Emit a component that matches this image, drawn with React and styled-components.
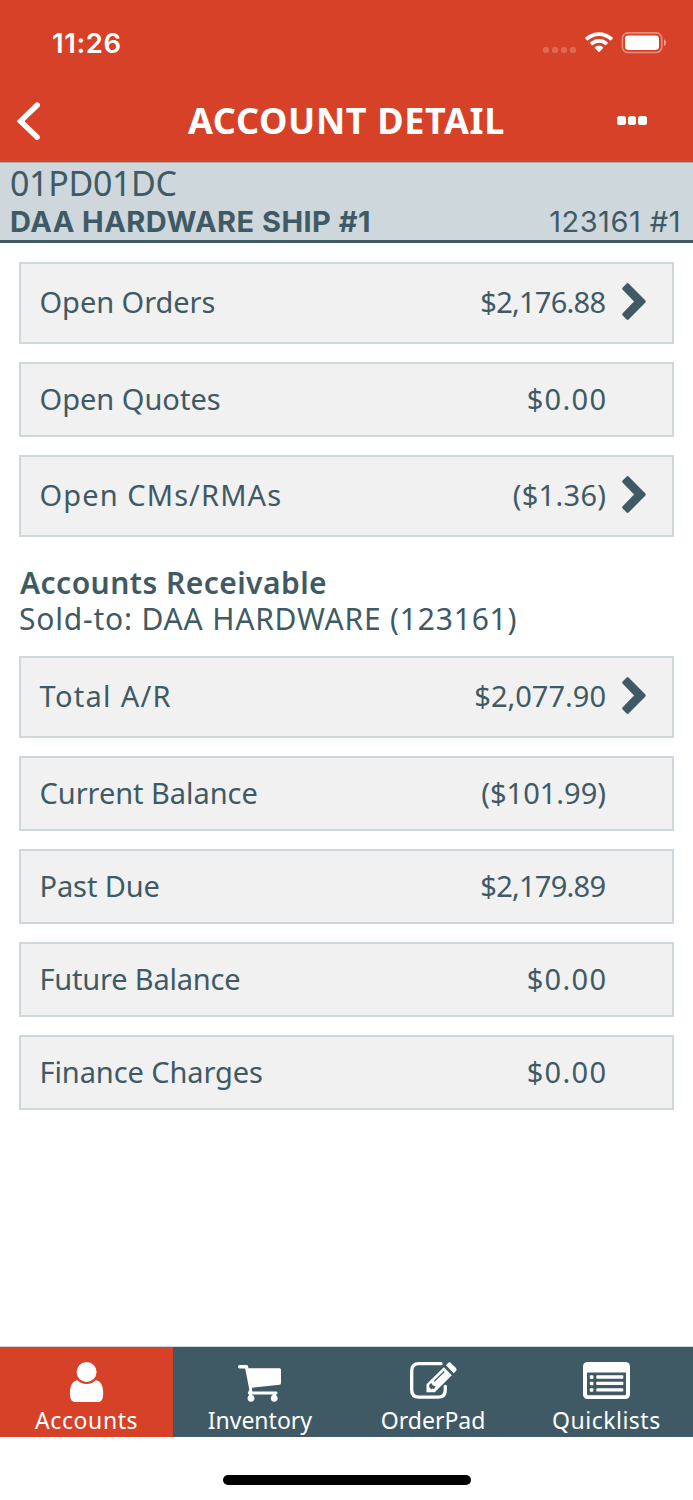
// Account detail screen
import React from 'react';
import styled, { createGlobalStyle } from 'styled-components';

const summaryRows = [
  { label: 'Open Orders', amount: '$2,176.88', link: true, spacing: -0.05, amountSpacing: -0.75 },
  { label: 'Open Quotes', amount: '$0.00', spacing: 0, amountSpacing: 1.3 },
  { label: 'Open CMs/RMAs', amount: '($1.36)', link: true, spacing: 1.1, amountSpacing: 0.3 },
];

const receivableRows = [
  { label: 'Total A/R', amount: '$2,077.90', link: true, spacing: 1.3, amountSpacing: 0 },
  { label: 'Current Balance', amount: '($101.99)', spacing: -0.05, amountSpacing: 0 },
  { label: 'Past Due', amount: '$2,179.89', spacing: -0.1, amountSpacing: -0.75 },
  { label: 'Future Balance', amount: '$0.00', spacing: -0.2, amountSpacing: 1.3 },
  { label: 'Finance Charges', amount: '$0.00', spacing: -0.1, amountSpacing: 1.3 },
];

const WifiIcon = () => (
  <svg width="28" height="21" viewBox="0 0 28 21" fill="#fff">
    <path d="M14 0.2C19.2 0.2 24 2.2 27.6 5.6Q28.1 6.2 27.6 6.7L26 8.3Q25.4 8.8 24.9 8.3C22 5.6 18.2 4 14 4S6 5.6 3.1 8.3Q2.6 8.8 2 8.3L0.4 6.7Q-0.1 6.2 0.4 5.6C4 2.2 8.8 0.2 14 0.2Z" />
    <path d="M14 7C17.3 7 20.3 8.2 22.6 10.3Q23.2 10.9 22.6 11.5L21 13Q20.4 13.5 19.9 13C18.3 11.6 16.2 10.8 14 10.8S9.7 11.6 8.1 13Q7.6 13.5 7 13L5.4 11.5Q4.8 10.9 5.4 10.3C7.7 8.2 10.7 7 14 7Z" />
    <path d="M14 13.8C15.6 13.8 16.9 14.3 18 15.2Q18.5 15.7 18 16.2L14.6 19.7Q14 20.3 13.4 19.7L10 16.2Q9.5 15.7 10 15.2C11.1 14.3 12.4 13.8 14 13.8Z" />
  </svg>
);

const BatteryIcon = () => (
  <svg width="46" height="22" viewBox="0 0 46 22">
    <rect x="0.4" y="0.9" width="39.4" height="19.6" rx="5.5" fill="none" stroke="#fff" strokeOpacity="0.4" strokeWidth="1.6" />
    <rect x="3" y="3.5" width="34" height="14.4" rx="3.3" fill="#fff" />
    <path d="M42 7.3V14.1Q44 13.2 44 10.7T42 7.3Z" fill="#fff" fillOpacity="0.5" />
  </svg>
);

const BackIcon = () => (
  <svg width="24" height="38" viewBox="0 0 24 38" fill="none" stroke="#fff" strokeWidth="5.4" strokeLinecap="round">
    <path d="M20.300 3L3.500 19.200L20.300 35.200" />
  </svg>
);

const ChevronIcon = () => (
  <svg width="24" height="37" viewBox="0 0 24 37" fill="#405a65" stroke="#405a65" strokeWidth="3.4" strokeLinejoin="round">
    <path d="M4.600 1.900L21 18.500L4.600 35.100L0.900 31.400L13.500 18.500L0.900 5.600Z" />
  </svg>
);

const PersonIcon = () => (
  <svg width="34" height="40" viewBox="0 0 34 40" fill="#fff">
    <circle cx="16.6" cy="10" r="10" />
    <path d="M7.5 18.2C9.5 20.6 12.8 22 16.6 22S23.7 20.6 25.7 18.2C31 18.6 33.2 24 33.2 31.5C33.2 37.5 31.5 40 27.5 40H5.7C1.7 40 0 37.5 0 31.5C0 24 2.2 18.6 7.5 18.2Z" />
  </svg>
);

const CartIcon = () => (
  <svg width="43" height="37" viewBox="0 0 43 37" fill="#fff">
    <path d="M1.5 0H8.5Q9.7 0 10 1.3L10.5 3.2H41.5Q43 3.2 43 4.7V18Q43 19.5 41.5 19.7L14 22.8L14.3 26.5H38.2Q39.5 26.5 39.5 28T38.2 29.5H11Q9.5 29.5 10 27.5L11.3 24.500L7.200 3.500H1.500Q0 3.300 0 1.700T1.500 0Z" />
    <path d="M11 26H14V31H11Z" />
    <circle cx="13" cy="33.3" r="3.4" />
    <circle cx="36.2" cy="33.3" r="3.4" />
    <path d="M34.5 29H38V31H34.5Z" />
  </svg>
);

const OrderPadIcon = () => (
  <svg width="47" height="37" viewBox="0 0 47 37">
    <path d="M31 1.7H9Q1.7 1.7 1.7 9V28Q1.7 35.2 9 35.2H28Q35.3 35.2 35.3 28V24.500" fill="none" stroke="#fff" strokeWidth="3.3" strokeLinecap="round" />
    <path d="M33.8 5.2L41.8 13.2L24.8 30.3H16.5V22.2Z" fill="#fff" />
    <path d="M36 3.2L38 1Q39.4-0.3 40.8 1L46 6.1Q47.400 7.600 46 9L43.700 11.200Z" fill="#fff" />
    <path d="M34.2 9.5L24.3 19.2" fill="none" stroke="#405a65" strokeWidth="1.2" />
    <path d="M19.3 22.7L21.3 20.9L22.6 23.2L25.6 24.4L24.1 26.9L22.2 26.6L21.600 27.400L19.200 25.200Z" fill="#405a65" />
  </svg>
);

const QuicklistIcon = () => (
  <svg width="47" height="37" viewBox="0 0 47 37">
    <rect width="47" height="37" rx="4.5" fill="#fff" />
    <path d="M4 10.5H43V32Q43 33.2 42 33.2H5Q4 33.2 4 32Z" fill="#405a65" />
    <g fill="#fff">
      <rect x="6.8" y="13.3" width="3.6" height="3.6" rx="1" />
      <rect x="6.8" y="19.7" width="3.6" height="3.6" rx="1" />
      <rect x="6.8" y="26.2" width="3.6" height="3.6" rx="1" />
      <rect x="13.3" y="13.3" width="27" height="3.4" rx="0.8" />
      <rect x="13.3" y="19.7" width="27" height="3.4" rx="0.8" />
      <rect x="13.3" y="26.2" width="27" height="3.4" rx="0.8" />
    </g>
  </svg>
);

const Row = ({ label, amount, link, spacing, amountSpacing }) => (
  <RowBox $tall={link}>
    <RowLabel $spacing={spacing}>{label}</RowLabel>
    <RowAmount $spacing={amountSpacing}>{amount}</RowAmount>
    <RowAction>{link && <ChevronIcon />}</RowAction>
  </RowBox>
);

const App = () => (
  <>
    <GlobalStyle />
    <Screen>
      <Header>
        <StatusBar>
          <Time>11:26</Time>
          <Signal><i /><i /><i /><i /></Signal>
          <WifiIcon />
          <BatteryIcon />
        </StatusBar>
        <NavBar>
          <BackIcon />
          <Title>ACCOUNT DETAIL</Title>
          <MoreButton><i /><i /><i /></MoreButton>
        </NavBar>
      </Header>

      <AccountStrip>
        <AccountCode>01PD01DC</AccountCode>
        <AccountLine>
          <AccountName>DAA HARDWARE SHIP #1</AccountName>
          <AccountNumber>123161 #1</AccountNumber>
        </AccountLine>
      </AccountStrip>

      <Content>
        <RowList>
          {summaryRows.map((row) => <Row key={row.label} {...row} />)}
        </RowList>
        <SectionHead>
          <SectionTitle>Accounts Receivable</SectionTitle>
          <SectionText>Sold-to: DAA HARDWARE (123161)</SectionText>
        </SectionHead>
        <RowList>
          {receivableRows.map((row) => <Row key={row.label} {...row} />)}
        </RowList>
      </Content>

      <TabBar>
        <Tab $active><TabIcon><PersonIcon /></TabIcon><TabLabel $spacing={0.6}>Accounts</TabLabel></Tab>
        <Tab><TabIcon $drop={3}><CartIcon /></TabIcon><TabLabel $spacing={0}>Inventory</TabLabel></Tab>
        <Tab><TabIcon><OrderPadIcon /></TabIcon><TabLabel $spacing={0}>OrderPad</TabLabel></Tab>
        <Tab><TabIcon><QuicklistIcon /></TabIcon><TabLabel $spacing={0.5}>Quicklists</TabLabel></Tab>
      </TabBar>
      <HomeArea><HomeIndicator /></HomeArea>
    </Screen>
  </>
);

export default App;

// ============================================
// STYLES
// ============================================

const GlobalStyle = createGlobalStyle`
  * { box-sizing: border-box; }
  body { margin: 0; background: #fff; }
  svg { display: block; flex: none; overflow: visible; }
`;

const Screen = styled.div`
  display: flex;
  flex-direction: column;
  width: 693px;
  height: 1500px;
  background: #fff;
  color: #405a65;
  font-family: 'Noto Sans', sans-serif;
  white-space: nowrap;
  overflow: hidden;
`;

const Header = styled.header`
  height: 162px;
  background: #d74128;
  color: #fff;
`;

const StatusBar = styled.div`
  display: flex;
  align-items: center;
  height: 85px;
  padding: 0 25px 0 52px;
`;

const Time = styled.span`
  flex: 1;
  font: 600 27.5px/32px Inter, sans-serif;
  letter-spacing: 0.6px;
`;

const Signal = styled.div`
  display: flex;
  gap: 3px;
  margin: 14px 9px 0 0;

  i {
    width: 6px;
    height: 6px;
    border-radius: 2px;
    background: rgba(255, 255, 255, 0.2);
  }

  & + svg {
    margin-right: 9px;
  }
`;

const NavBar = styled.nav`
  display: flex;
  align-items: center;
  height: 72px;
  padding: 0 46px 0 17px;
`;

const Title = styled.h1`
  flex: 1;
  margin: 0;
  padding-left: 147px;
  font: 700 36px/50px 'Noto Sans', sans-serif;
  letter-spacing: 0.65px;
`;

const MoreButton = styled.div`
  display: flex;
  gap: 2px;
  margin-top: -1px;

  i {
    width: 8.7px;
    height: 9px;
    border-radius: 2.5px;
    background: #fff;
  }
`;

const AccountStrip = styled.section`
  height: 81px;
  padding: 0 12px 0 10px;
  background: #cdd7dc;
  border-top: 1px solid #a9a9a8;
  border-bottom: 3px solid #405a65;
`;

const AccountCode = styled.div`
  height: 41px;
  font-size: 34px;
  line-height: 40px;
  letter-spacing: -0.35px;
`;

const AccountLine = styled.div`
  display: flex;
  justify-content: space-between;
  font: 400 29px/36px Inter, sans-serif;
  letter-spacing: 0.45px;
`;

const AccountName = styled.span`
  font-weight: 700;
`;

const AccountNumber = styled.span`
  letter-spacing: 0.5px;
`;

const Content = styled.main`
  flex: 1;
  padding: 19px 19px 0;
`;

const RowList = styled.div`
  display: flex;
  flex-direction: column;
  gap: 18px;
`;

const RowBox = styled.div`
  display: flex;
  align-items: center;
  height: ${({ $tall }) => ($tall ? 82 : 75)}px;
  padding: 0 25px ${({ $tall }) => ($tall ? 3 : 2)}px 18.5px;
  background: #f1f1f1;
  border: 2px solid #cdd7dc;
  font-size: 29px;
`;

const RowLabel = styled.span`
  flex: 1;
  letter-spacing: ${({ $spacing }) => $spacing}px;
`;

/* the negative margin drops the spacing after the last digit */
const RowAmount = styled.span`
  letter-spacing: ${({ $spacing }) => $spacing}px;
  margin-right: ${({ $spacing }) => -$spacing}px;
`;

const RowAction = styled.span`
  display: flex;
  justify-content: flex-end;
  width: 41px;
`;

const SectionHead = styled.div`
  height: 119px;
  padding-top: 27px;
`;

const SectionTitle = styled.h2`
  margin: 0;
  padding-left: 1px;
  font-size: 30px;
  font-weight: 600;
  line-height: 37px;
  letter-spacing: 0.45px;
`;

const SectionText = styled.p`
  margin: 0;
  font-size: 30px;
  line-height: 36px;
  letter-spacing: 0.8px;
`;

const TabBar = styled.nav`
  display: grid;
  grid-template-columns: repeat(4, 1fr);
  height: 91px;
  border-top: 1px solid #cdd7dc;
`;

const Tab = styled.div`
  display: flex;
  flex-direction: column;
  align-items: center;
  background: ${({ $active }) => ($active ? '#d74128' : '#405a65')};
  color: #fff;
`;

const TabIcon = styled.div`
  height: 60px;
  padding-top: ${({ $drop = 0 }) => 15 + $drop}px;
`;

const TabLabel = styled.span`
  font-size: 23px;
  line-height: 27px;
  letter-spacing: ${({ $spacing }) => $spacing}px;
`;

const HomeArea = styled.div`
  display: flex;
  justify-content: center;
  height: 63px;
  padding-top: 38px;
`;

const HomeIndicator = styled.div`
  width: 248px;
  height: 10px;
  border-radius: 5px;
  background: #000;
`;
